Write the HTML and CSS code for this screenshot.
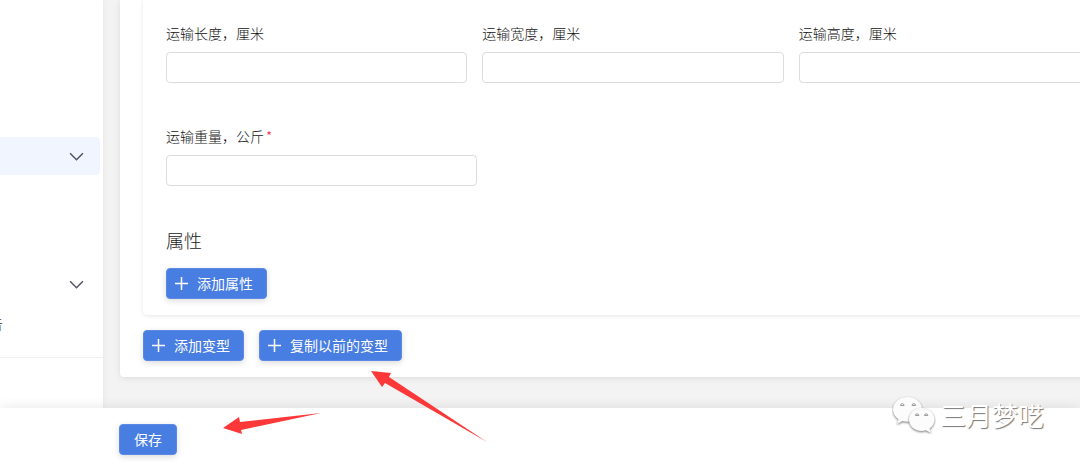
FILE: index.html
```html
<!DOCTYPE html>
<html lang="zh-CN">
<head>
    <meta charset="UTF-8">
    <title>运输</title>
    <link rel="stylesheet" href="styles.css">
</head>
<body>
    <div class="layout">
        <nav class="sidebar">
            <button type="button" class="nav-item active" aria-label="展开">
                <svg class="chevron" viewBox="0 0 14 8"><path d="M1 1l6 6 6-6"/></svg>
            </button>
            <button type="button" class="nav-item group" aria-label="展开">
                <svg class="chevron" viewBox="0 0 14 8"><path d="M1 1l6 6 6-6"/></svg>
            </button>
            <a href="#" class="nav-link">告</a>
            <hr class="divider">
        </nav>

        <main class="content">
            <div class="card">
                <section class="variant">
                    <div class="row">
                        <div class="field">
                            <label for="length">运输长度，厘米</label>
                            <input type="text" id="length">
                        </div>
                        <div class="field">
                            <label for="width">运输宽度，厘米</label>
                            <input type="text" id="width">
                        </div>
                        <div class="field">
                            <label for="height">运输高度，厘米</label>
                            <input type="text" id="height">
                        </div>
                    </div>

                    <div class="row weight-row">
                        <div class="field">
                            <label for="weight">运输重量，公斤<span class="required">*</span></label>
                            <input type="text" id="weight">
                        </div>
                    </div>

                    <h2>属性</h2>
                    <button type="button" class="btn">
                        <svg class="plus" viewBox="0 0 12 12"><path d="M6 0v12M0 6h12"/></svg>
                        <span>添加属性</span>
                    </button>
                </section>

                <div class="actions">
                    <button type="button" class="btn">
                        <svg class="plus" viewBox="0 0 12 12"><path d="M6 0v12M0 6h12"/></svg>
                        <span>添加变型</span>
                    </button>
                    <button type="button" class="btn">
                        <svg class="plus" viewBox="0 0 12 12"><path d="M6 0v12M0 6h12"/></svg>
                        <span>复制以前的变型</span>
                    </button>
                </div>
            </div>
        </main>
    </div>

    <footer class="footer">
        <button type="button" class="btn save"><span>保存</span></button>
    </footer>

    <!-- arrows pointing at the copy and save buttons -->
    <svg class="arrow arrow-copy" viewBox="0 0 117 72">
        <path d="M0 0L20 2 18 6 116 71 14 12 11 16z"/>
    </svg>
    <svg class="arrow arrow-save" viewBox="0 0 98 22">
        <path d="M0 15L16 4 17 9 98 0 18 17 19 21z"/>
    </svg>

    <div class="watermark">
        <svg class="bubbles" viewBox="0 0 44 38">
            <path class="bubble" d="M15.500 1C7.500 1 1 6.500 1 13.500c0 4 2 7.500 5.500 9.800L5 28l5.500-3c1.700.5 3.300.8 5 .8C23.500 25.800 30 20.500 30 13.500S23.500 1 15.500 1z"/>
            <path class="bubble" d="M29.500 12C22.500 12 17 17 17 23.500S22.500 35 29.500 35c1.500 0 3-.2 4.500-.7l5 2.700-1.500-4.500c3.300-2.200 5-5.400 5-9C42.500 17 36.500 12 29.500 12z"/>
            <path class="eye" d="M8.500 9.500a1.800 1.800 0 0 1 3.600 0zM20 9.500a1.800 1.800 0 0 1 3.600 0zM23.500 19.500a1.700 1.700 0 0 1 3.400 0zM32.500 19.500a1.700 1.700 0 0 1 3.400 0z"/>
        </svg>
        <span>三月梦呓</span>
    </div>
</body>
</html>
```

FILE: styles.css
```css
* {
    box-sizing: border-box;
}

body {
    position: relative;
    display: flex;
    flex-direction: column;
    min-height: 100vh;
    margin: 0;
    overflow: hidden;
    background-color: #f3f3f3;
    color: #111;
    font-family: "Noto Sans CJK SC", sans-serif;
    font-size: 14px;
    font-weight: 300;
    line-height: 20px;
}

.layout {
    display: flex;
    flex: 1;
}

.sidebar {
    flex: 0 0 103px;
    padding-top: 137px;
    background-color: #fff;
    box-shadow: 0 0 6px rgba(0, 0, 0, 0.06);
}

.nav-item {
    display: flex;
    align-items: center;
    justify-content: flex-end;
    width: 100px;
    height: 38px;
    padding: 0 16px;
    border: none;
    border-radius: 0 4px 4px 0;
    background-color: transparent;
    cursor: pointer;
}

.nav-item.active {
    background-color: #f0f5ff;
}

.nav-item.group {
    margin-top: 90px;
}

.chevron {
    width: 15px;
    height: 9px;
    fill: none;
    stroke: #535364;
    stroke-width: 1.4;
}

.nav-link {
    display: block;
    margin: 10px 0 24px -11px;
    color: #333;
    text-decoration: none;
}

.divider {
    margin: 0;
    border: none;
    border-top: 1px solid #f0f0f0;
}

.content {
    flex: 1;
    min-width: 0;
    padding: 0 0 31px 17px;
    overflow: hidden;
}

/* the form is wider than the visible pane */
.card {
    margin-right: -66px;
    padding: 0 23px 16px;
    border-radius: 0 0 4px 4px;
    background-color: #fff;
    box-shadow: 0 1px 6px rgba(0, 0, 0, 0.1);
}

.variant {
    padding: 23px 23px 16px;
    border-radius: 0 0 4px 4px;
    box-shadow: 0 1px 4px rgba(0, 0, 0, 0.1);
}

.row {
    display: flex;
    gap: 15px;
}

.field {
    flex: 1;
}

.weight-row {
    margin-top: 43px;
}

.weight-row .field {
    flex: 0 0 calc(100% / 3);
}

label {
    display: block;
    margin-bottom: 9px;
}

.required {
    margin-left: 2px;
    color: #f5222d;
}

input {
    display: block;
    width: 100%;
    height: 31px;
    padding: 0 10px;
    border: 1px solid #dcdcdc;
    border-radius: 4px;
    background-color: #fff;
    font: inherit;
}

h2 {
    margin: 42px 0 16px;
    color: #222;
    font-size: 18px;
    font-weight: 300;
    line-height: 24px;
}

.btn {
    display: inline-flex;
    align-items: center;
    gap: 9px;
    height: 31px;
    padding: 0 13px 0 8px;
    border: 1px solid #5b89e5;
    border-radius: 4px;
    background-color: #487de2;
    box-shadow: 0 2px 6px rgba(0, 0, 0, 0.14);
    color: #fff;
    font: inherit;
    font-weight: 400;
    cursor: pointer;
    vertical-align: top;
}

.btn span {
    padding-bottom: 2px;
}

.plus {
    width: 13px;
    height: 13px;
    fill: none;
    stroke: #fff;
    stroke-width: 1.4;
}

.actions {
    display: flex;
    gap: 15px;
    margin-top: 15px;
}

.footer {
    position: relative;
    padding: 16px 119px 9px;
    background-color: #fff;
    box-shadow: 0 0 12px rgba(0, 0, 0, 0.1);
}

.save {
    padding: 0 14px;
}

.arrow {
    position: absolute;
    fill: #fd3838;
}

.arrow-copy {
    top: 371px;
    left: 371px;
    width: 117px;
    height: 72px;
}

.arrow-save {
    top: 413px;
    left: 223px;
    width: 98px;
    height: 22px;
}

.watermark {
    position: absolute;
    right: 36px;
    bottom: 30px;
    display: flex;
    align-items: center;
    gap: 4px;
    color: #fff;
    font-size: 26px;
    font-weight: 400;
    line-height: 38px;
    text-shadow: 1px 1px 1px #777;
}

.bubbles {
    width: 44px;
    height: 38px;
}

.bubble {
    fill: #fcfcfc;
    filter: drop-shadow(0 1px 1px #777);
}

.eye {
    fill: #fff;
    stroke: #999;
    stroke-width: 1;
}
```
